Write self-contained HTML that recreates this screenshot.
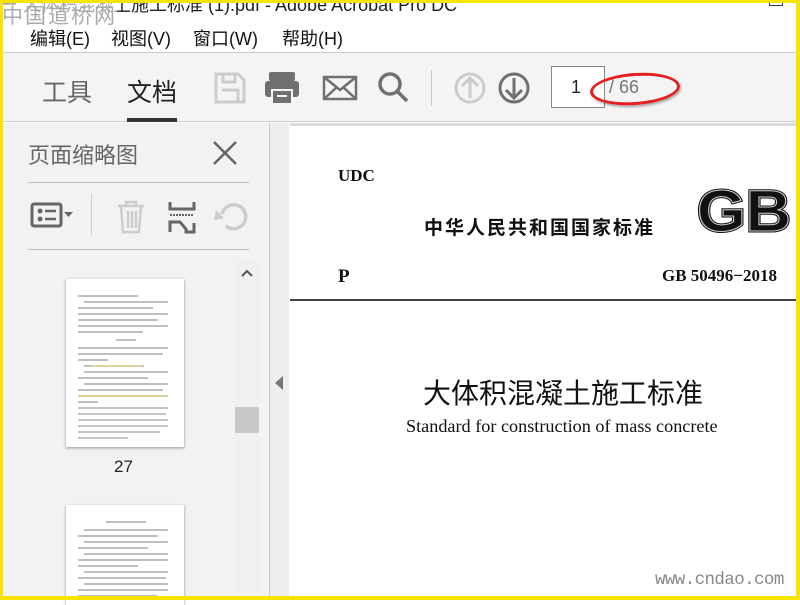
<!DOCTYPE html>
<html><head><meta charset="utf-8"><style>
*{margin:0;padding:0;box-sizing:border-box}
body{width:800px;height:600px;overflow:hidden;position:relative;background:#fff;font-family:"Liberation Sans","Noto Sans CJK SC",sans-serif}
.a{position:absolute}
.y{background:#f5e400;position:absolute}
.cj{font-family:"Liberation Sans","Noto Sans CJK SC",sans-serif}
.sr{font-family:"Liberation Serif","Noto Serif CJK SC",serif}
.tl{position:absolute;height:1px;background:#bbb}
</style></head><body>
<div class="a" style="left:0;top:-9px;font-size:18px;color:#222;white-space:nowrap">ー 大体积混凝土施工标准 (1).pdf - Adobe Acrobat Pro DC</div>
<div class="a" style="left:2px;top:0px;font-size:21px;color:#aaa;letter-spacing:2px;background:rgba(255,255,255,.6)">中国道桥网</div>
<div class="a" style="left:769px;top:0;width:14px;height:6px;border:1px solid #333;border-top:none"></div>
<div class="a cj" style="left:30px;top:25px;font-size:18px;color:#111;white-space:nowrap;word-spacing:0">编辑(E)<span style="margin-left:21px">视图(V)</span><span style="margin-left:22px">窗口(W)</span><span style="margin-left:24px">帮助(H)</span></div>
<div class="a" style="left:0;top:52px;width:800px;height:70px;background:#f4f4f4;border-top:1px solid #ccc;border-bottom:1px solid #ccc"></div>
<div class="a cj" style="left:42px;top:73px;font-size:25px;color:#666">工具</div>
<div class="a cj" style="left:127px;top:73px;font-size:25px;color:#222">文档</div>
<div class="a" style="left:127px;top:118px;width:50px;height:4px;background:#333"></div>
<svg class="a" style="left:212px;top:70px" width="320" height="36" viewBox="0 0 320 36">
<g fill="none" stroke="#ccc" stroke-width="3"><path d="M4 4h22l6 6v22H4z"/><path d="M11 4v8h12V4M10 20h16v12"/></g>
<g fill="#707070"><rect x="57" y="2" width="26" height="9" rx="2"/><rect x="53" y="11" width="34" height="16" rx="3"/><rect x="60" y="20" width="20" height="14" fill="#707070" stroke="#f4f4f4" stroke-width="2"/><rect x="65" y="25" width="10" height="2" fill="#f4f4f4"/></g>
<g fill="none" stroke="#707070" stroke-width="2.5"><rect x="112" y="7" width="32" height="22"/><path d="M112 7l16 13 16-13M112 29l12-11M144 29l-12-11"/></g>
<g fill="none" stroke="#707070" stroke-width="3.5"><circle cx="178" cy="14" r="10"/><path d="M185 21l10 10"/></g>
<rect x="219" y="0" width="1" height="36" fill="#ccc"/>
<g fill="none" stroke="#ccc" stroke-width="3"><circle cx="258" cy="18" r="14"/><path d="M258 28V9M250 16l8-8 8 8"/></g>
<g fill="none" stroke="#707070" stroke-width="3"><circle cx="302" cy="18" r="14"/><path d="M302 8v19M294 20l8 8 8-8"/></g>
</svg>
<div class="a" style="left:551px;top:66px;width:54px;height:42px;background:#fff;border:1px solid #888;font-size:18px;text-align:right;padding:10px 23px 0 0;color:#222">1</div>
<div class="a" style="left:609px;top:77px;font-size:18px;color:#777">/ 66</div>
<div class="a" style="left:590px;top:73px;width:90px;height:32px;border:3px solid #e42020;border-radius:50%;transform:rotate(-4deg);box-shadow:1px 2px 2px rgba(0,0,0,.3)"></div>
<div class="a" style="left:0;top:123px;width:269px;height:477px;background:#f2f2f2"></div>
<div class="a" style="left:269px;top:123px;width:1px;height:477px;background:#c8c8c8"></div>
<div class="a" style="left:270px;top:123px;width:19px;height:477px;background:#eee"></div>
<div class="a" style="left:275px;top:376px;width:0;height:0;border-top:7px solid transparent;border-bottom:7px solid transparent;border-right:8px solid #777"></div>
<div class="a cj" style="left:28px;top:138px;font-size:22px;color:#666">页面缩略图</div>
<svg class="a" style="left:212px;top:140px" width="26" height="26"><path d="M2 2l22 22M24 2L2 24" stroke="#666" stroke-width="2.5"/></svg>
<div class="tl" style="left:28px;top:182px;width:221px"></div>
<div class="tl" style="left:28px;top:249px;width:221px"></div>
<div class="a" style="left:91px;top:194px;width:1px;height:42px;background:#ccc"></div>
<svg class="a" style="left:30px;top:200px" width="225" height="34">
<rect x="2" y="4" width="29" height="22" rx="2" fill="none" stroke="#666" stroke-width="3"/><circle cx="10" cy="11" r="2.5" fill="#666"/><circle cx="10" cy="19" r="2.5" fill="#666"/><path d="M15 11h11M15 19h11" stroke="#666" stroke-width="2.5"/><path d="M34 12h9l-4.5 5z" fill="#666"/>
<g fill="none" stroke="#ccc" stroke-width="2.5"><path d="M88 6h26M96 6V2h10v4M91 6l2 26h16l2-26M98 11v17M102 11v17M106 11v17"/></g>
<g fill="none" stroke="#666" stroke-width="3"><path d="M140 2v7h24V2M140 32V22h10l6 7v3h8v-9"/></g><path d="M140 15h24" stroke="#666" stroke-width="2" stroke-dasharray="2 1"/>
<g fill="none" stroke="#ccc" stroke-width="3.5"><path d="M196 26a12 12 0 1 0 -4 -12"/></g><path d="M186 10l8 8-10 2z" fill="#ccc"/>
</svg>
<div class="a" style="left:235px;top:260px;width:24px;height:340px;background:#f0f0f0"></div>
<svg class="a" style="left:241px;top:268px" width="12" height="10"><path d="M1 8l5-5 5 5" fill="none" stroke="#555" stroke-width="2"/></svg>
<div class="a" style="left:235px;top:407px;width:24px;height:26px;background:#c8c8c8"></div>
<div class="a" style="left:66px;top:279px;width:118px;height:168px;background:#fff;box-shadow:0 1px 3px rgba(0,0,0,.4)"></div>
<svg class="a" style="left:78px;top:294px" width="95" height="150"><g stroke="#999" stroke-width="1.3">
<path d="M0 2h60M6 8h84M0 14h75M0 20h90M0 26h80M0 32h90M0 38h65"/><path d="M38 46h20"/><path d="M0 54h90M0 60h85M0 66h30"/><path d="M6 72h60M6 78h84M0 84h70M6 90h84M0 96h85"/><path d="M0 102h90M0 108h20"/><path d="M0 114h90M0 120h88M0 126h90M0 132h90M0 138h82M0 144h50" opacity=".9"/></g><path d="M14 72h50M0 102h90" stroke="#e6dd70" stroke-width="1.5" opacity=".7"/></svg>
<div class="a" style="left:114px;top:457px;font-size:17px;color:#222">27</div>
<div class="a" style="left:66px;top:505px;width:118px;height:100px;background:#fff;box-shadow:0 1px 3px rgba(0,0,0,.4)"></div>
<svg class="a" style="left:78px;top:520px" width="95" height="80"><g stroke="#999" stroke-width="1.3"><path d="M28 2h40M6 10h84M0 16h80M6 22h84M0 28h70M6 34h84M0 40h90M0 46h60M6 52h84M0 58h88M6 64h84M0 70h90M0 76h80"/></g></svg>
<div class="a" style="left:290px;top:123px;width:506px;height:3px;background:#ddd"></div>
<div class="a" style="left:290px;top:126px;width:506px;height:474px;background:#fff"></div>
<div class="a sr" style="left:338px;top:166px;font-size:17px;font-weight:bold;color:#111">UDC</div>
<div class="a cj" style="left:424px;top:213px;font-size:19px;font-weight:bold;color:#111;letter-spacing:2px">中华人民共和国国家标准</div>
<svg class="a" style="left:695px;top:184px" width="100" height="52"><text x="2" y="47" font-family="Liberation Sans" font-weight="bold" font-size="58" textLength="94" lengthAdjust="spacingAndGlyphs" fill="#111" stroke="#111" stroke-width="3">GB</text><text x="2" y="47" font-family="Liberation Sans" font-weight="bold" font-size="58" textLength="94" lengthAdjust="spacingAndGlyphs" fill="none" stroke="#fff" stroke-width="1" opacity=".8">GB</text></svg>
<div class="a sr" style="left:338px;top:266px;font-size:19px;font-weight:bold;color:#111">P</div>
<div class="a sr" style="left:662px;top:266px;font-size:17px;font-weight:bold;color:#111">GB 50496−2018</div>
<div class="a" style="left:290px;top:299px;width:506px;height:2px;background:#444"></div>
<div class="a cj" style="left:423px;top:372px;font-size:28px;color:#111">大体积混凝土施工标准</div>
<div class="a sr" style="left:406px;top:416px;font-size:18.2px;color:#111;white-space:nowrap">Standard for construction of mass concrete</div>
<div class="a" style="left:655px;top:570px;font-size:17.5px;color:#888;font-family:'Liberation Mono',monospace;white-space:nowrap;letter-spacing:-0.6px">www.cndao.com</div>
<div class="y" style="left:0;top:0;width:3px;height:600px"></div>
<div class="y" style="right:0;top:0;width:4px;height:600px"></div>
<div class="y" style="left:0;top:0;width:800px;height:3px"></div>
<div class="y" style="left:0;bottom:0;width:800px;height:4px"></div>
</body></html>
